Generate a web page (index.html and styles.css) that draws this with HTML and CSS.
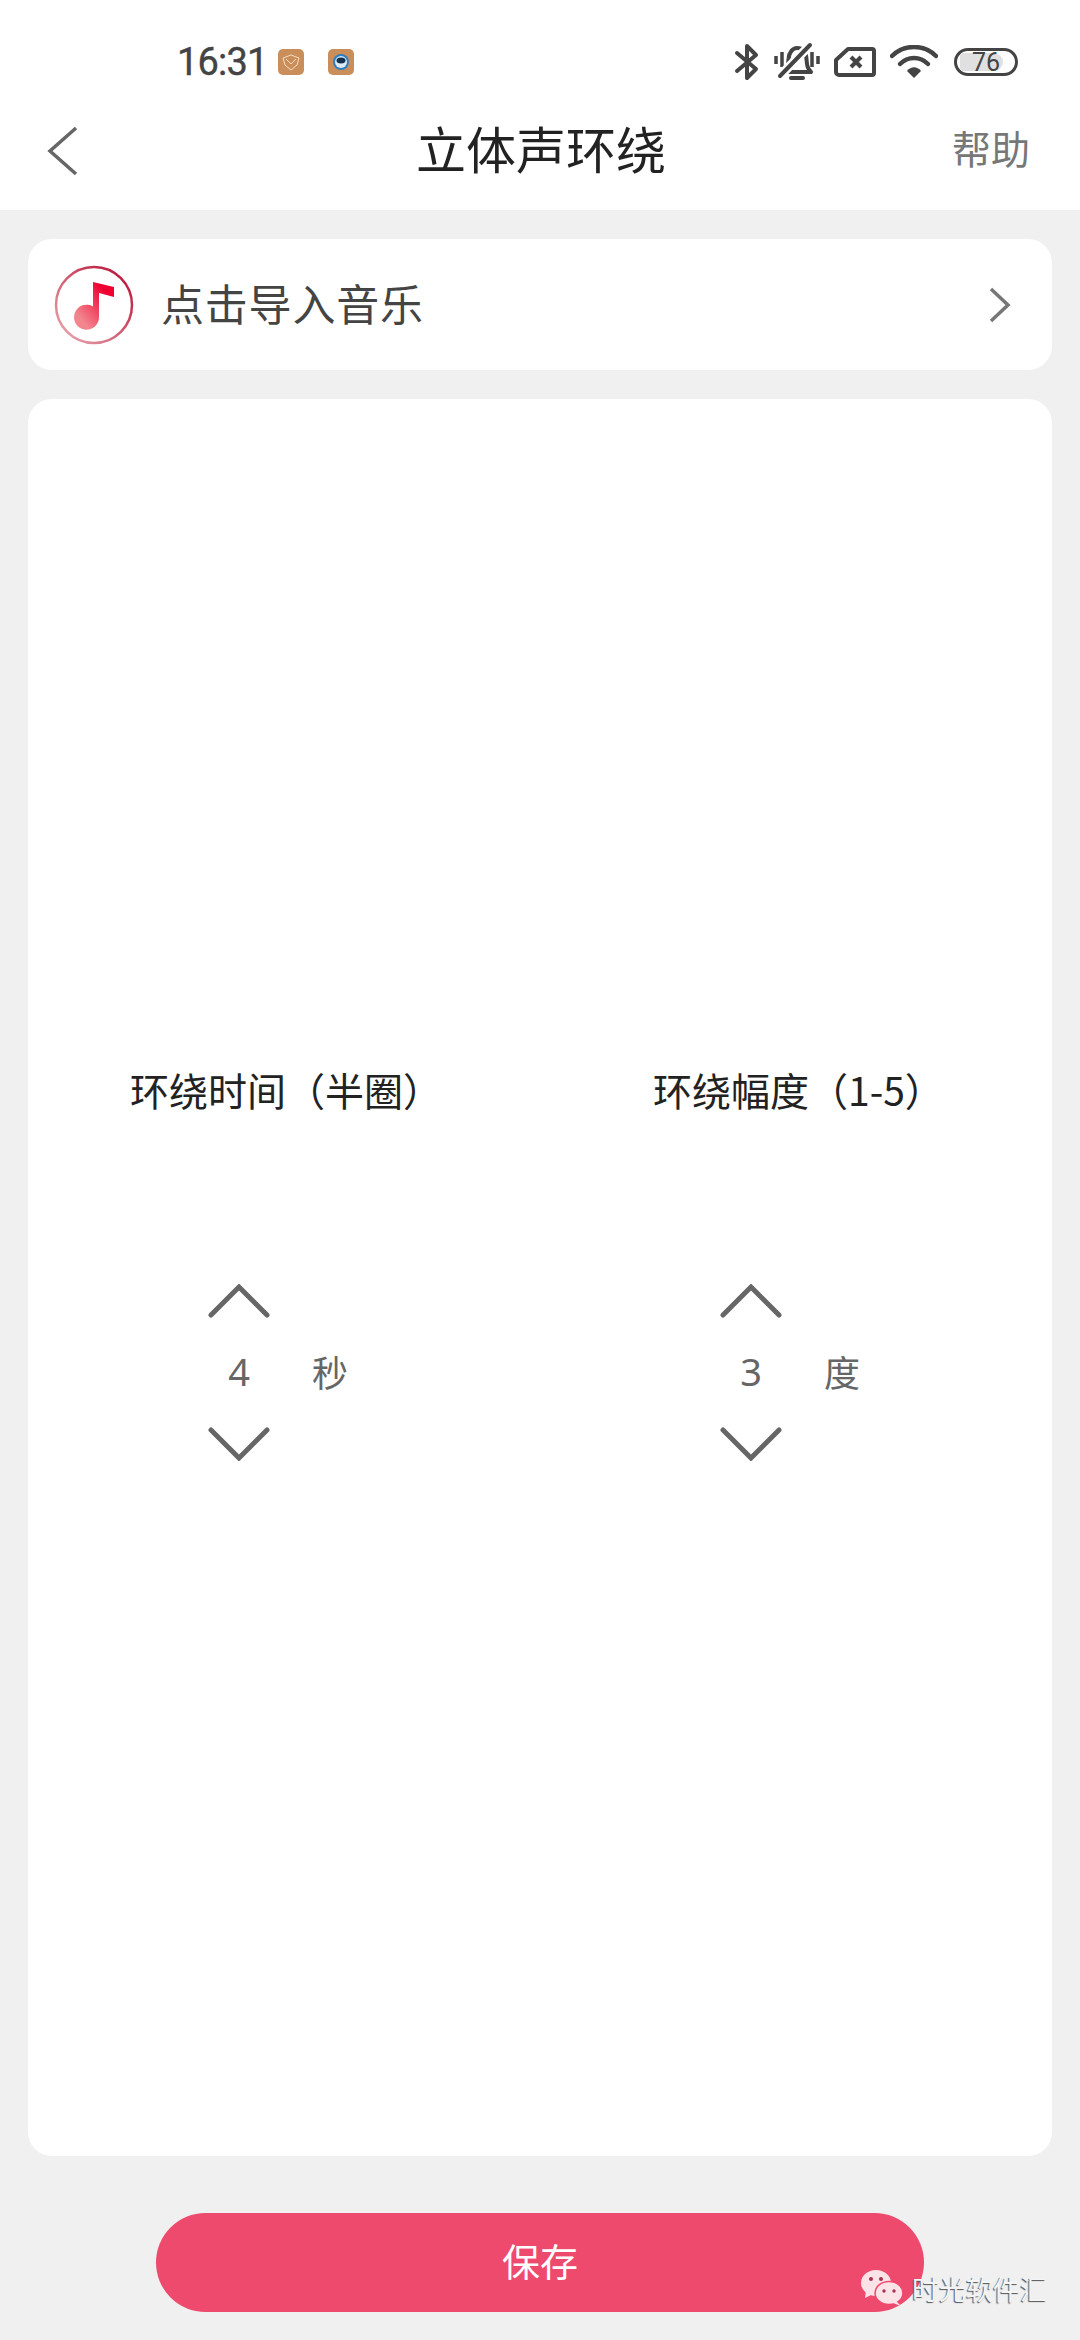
FILE: index.html
```html
<!DOCTYPE html>
<html lang="zh-CN">
<head>
  <meta charset="UTF-8" />
  <title>立体声环绕</title>
  <link rel="stylesheet" href="styles.css">
</head>
<body>
  <header class="top">
    <div class="status">
      <span class="time">16:31</span>
      <span class="app-icon">
        <svg width="26" height="26" viewBox="0 0 26 26"><rect width="26" height="26" rx="5" fill="#c98e5a"/><path d="M5 9 L13 6 L21 9 L19 16 L13 21 L7 16 Z M8 10 L13 15 L18 10" fill="none" stroke="#f7dcc0" stroke-width="1"/></svg>
      </span>
      <span class="app-icon second">
        <svg width="26" height="26" viewBox="0 0 26 26"><rect width="26" height="26" rx="5" fill="#c98e5a"/><circle cx="13" cy="13" r="8" fill="#2f7fc0"/><circle cx="13" cy="13" r="6" fill="#dcebf5"/><ellipse cx="13" cy="11.500" rx="4.500" ry="3" fill="#12304f"/></svg>
      </span>
      <span class="status-right">
        <svg width="26" height="40" viewBox="0 0 26 40"><path d="M3 11 L22 27 L13 36 V4 L22 13 L3 29" fill="none" stroke="#444" stroke-width="4" stroke-linecap="round" stroke-linejoin="round"/></svg>
        <svg width="46" height="40" viewBox="0 0 46 40"><path d="M10 30 C15 26 14 22 14.500 17 C15 10 19 6 23 6 C29 6 32 10 32.500 17 C33 23 33 26 37 30 Z" fill="none" stroke="#444" stroke-width="4" stroke-linejoin="round"/><path d="M17 36 H29" stroke="#444" stroke-width="4" stroke-linecap="round"/><path d="M2 14 V22 M8 10 V25 M38 10 V25 M44 14 V22" stroke="#444" stroke-width="3.500"/><path d="M6 34 L36 3" stroke="#fff" stroke-width="9"/><path d="M6 34 L36 3" stroke="#444" stroke-width="4" stroke-linecap="round"/></svg>
        <svg width="42" height="32" viewBox="0 0 42 32"><path d="M14 3 H38 A2 2 0 0 1 40 5 V27 A2 2 0 0 1 38 29 H5 A3 3 0 0 1 2 26 V14 Z" fill="none" stroke="#444" stroke-width="4" stroke-linejoin="round"/><path d="M17 11 L27 21 M27 11 L17 21" stroke="#444" stroke-width="4"/></svg>
        <svg width="48" height="34" viewBox="0 0 48 34"><path d="M2 11 C14 -1 34 -1 46 11" fill="none" stroke="#444" stroke-width="4.500" stroke-linecap="round"/><path d="M10 19 C18 11 30 11 38 19" fill="none" stroke="#444" stroke-width="4.500" stroke-linecap="round"/><path d="M17 26 C21 21 27 21 31 26 L24 33 Z" fill="#444"/></svg>
        <span class="battery"><span class="battery-fill"></span><span class="battery-num">76</span></span>
      </span>
    </div>
    <nav class="nav">
      <svg class="back" width="32" height="50" viewBox="0 0 32 50"><path d="M29 2 L3 25 L29 48" fill="none" stroke="#666" stroke-width="3.500"/></svg>
      <h1 class="title">立体声环绕</h1>
      <span class="help">帮助</span>
    </nav>
  </header>

  <main class="content">
    <section class="import">
      <svg class="music" width="80" height="80" viewBox="0 0 80 80">
        <defs>
          <linearGradient id="ring" x1="0" y1="1" x2="1" y2="0">
            <stop offset="0" stop-color="#eab0b6"/>
            <stop offset="1" stop-color="#b5082e"/>
          </linearGradient>
          <linearGradient id="note" x1="0" y1="1" x2="1" y2="0">
            <stop offset="0.200" stop-color="#f2858e"/>
            <stop offset="0.800" stop-color="#ee0030"/>
          </linearGradient>
        </defs>
        <circle cx="40" cy="40" r="38" fill="#fff" stroke="url(#ring)" stroke-width="2.500"/>
        <path d="M39 17 L60 22 V32 L45 28 V52 A12.500 12.500 0 1 1 39 41.500 Z" fill="url(#note)"/>
      </svg>
      <span class="import-text">点击导入音乐</span>
      <svg class="more" width="24" height="38" viewBox="0 0 24 38"><path d="M3 3 L20 19 L3 35" fill="none" stroke="#777" stroke-width="3.500"/></svg>
    </section>

    <section class="panel">
      <div class="setting">
        <h2 class="label">环绕时间（半圈）</h2>
        <div class="picker">
          <div class="stepper">
            <svg width="62" height="34" viewBox="0 0 62 34"><path d="M3 31 L31 3 L59 31" fill="none" stroke="#666" stroke-width="5" stroke-linecap="round"/></svg>
            <span class="value">4</span>
            <svg width="62" height="34" viewBox="0 0 62 34"><path d="M3 3 L31 31 L59 3" fill="none" stroke="#666" stroke-width="5" stroke-linecap="round"/></svg>
          </div>
          <span class="unit">秒</span>
        </div>
      </div>
      <div class="setting">
        <h2 class="label">环绕幅度（1-5）</h2>
        <div class="picker">
          <div class="stepper">
            <svg width="62" height="34" viewBox="0 0 62 34"><path d="M3 31 L31 3 L59 31" fill="none" stroke="#666" stroke-width="5" stroke-linecap="round"/></svg>
            <span class="value">3</span>
            <svg width="62" height="34" viewBox="0 0 62 34"><path d="M3 3 L31 31 L59 3" fill="none" stroke="#666" stroke-width="5" stroke-linecap="round"/></svg>
          </div>
          <span class="unit">度</span>
        </div>
      </div>
    </section>

    <button class="save"><span class="save-text">保存</span></button>
  </main>

  <div class="watermark">
    <svg width="44" height="38" viewBox="0 0 44 38">
      <ellipse cx="16" cy="14" rx="15" ry="13" fill="#fbe3e8"/>
      <path d="M6 22 L5 29 L13 25 Z" fill="#fbe3e8"/>
      <ellipse cx="29" cy="24" rx="14" ry="11.500" fill="#fbe3e8" stroke="#ef4a6e" stroke-width="1.500"/>
      <path d="M36 32 L41 37 L33 34 Z" fill="#fbe3e8"/>
      <circle cx="11" cy="10" r="2" fill="#a8324f"/><circle cx="21" cy="10" r="2" fill="#a8324f"/>
      <circle cx="24" cy="22" r="1.700" fill="#a8324f"/><circle cx="34" cy="22" r="1.700" fill="#a8324f"/>
    </svg>
    <span class="mark-text">时光软件汇</span>
  </div>
</body>
</html>
```

FILE: styles.css
```css
* { box-sizing: border-box; }
html, body { margin: 0; padding: 0; }
body { width: 1080px; height: 2340px; position: relative; overflow: hidden; background: #f0f0f0; font-family: "Noto Sans CJK SC", "Noto Sans", sans-serif; color: #111; }

.top { height: 210px; background: #fff; }
.status { height: 90px; padding: 34px 0 0 177px; display: flex; align-items: center; }
.time { width: 100px; font-family: Roboto, sans-serif; font-size: 38px; color: #444; letter-spacing: -0.8px; -webkit-text-stroke: 0.4px #444; }
.app-icon { display: flex; margin-left: 1px; }
.app-icon.second { margin-left: 24px; }
.status-right { margin-left: auto; padding-right: 62px; display: flex; align-items: center; gap: 14px; }
.battery { width: 64px; height: 28px; margin-left: 2px; border: 3px solid #444; border-radius: 14px; position: relative; display: flex; align-items: center; justify-content: center; overflow: hidden; }
.battery-fill { position: absolute; left: 3px; top: 2px; bottom: 2px; width: 43px; background: #e0e0e0; border-radius: 3px 9px 9px 3px; }
.battery-num { position: relative; font-family: Roboto, sans-serif; font-size: 25px; line-height: 1; color: #444; }

.nav { height: 120px; padding: 0 50px 0 47px; display: flex; align-items: center; justify-content: space-between; }
.back { margin-top: 2px; }
.title { margin: 0 0 6px 51px; font-size: 50px; font-weight: 400; line-height: 1; color: #222; }
.help { margin-bottom: 6px; font-size: 39px; line-height: 1; color: #777; }

.content { padding: 29px 28px 0; }
.import { height: 131px; padding: 0 40px 0 26px; background: #fff; border-radius: 24px; display: flex; align-items: center; }
.import-text { margin: 0 0 6px 27px; font-size: 43px; letter-spacing: 0.8px; color: #444; }
.more { margin-left: auto; }

.panel { height: 1757px; margin-top: 29px; background: #fff; border-radius: 24px; padding-top: 664px; display: grid; grid-template-columns: 496px 1fr; align-content: start; }
.setting { display: flex; flex-direction: column; }
.label { margin: 0; padding-left: 102px; font-size: 39px; font-weight: 400; line-height: 52px; white-space: nowrap; color: #222; }
.setting + .setting .label { padding-left: 0; margin-left: 129px; }
.picker { margin-top: 169px; padding-left: 180px; display: flex; align-items: center; }
.setting + .setting .picker { padding-left: 196px; }
.stepper { width: 62px; display: flex; flex-direction: column; align-items: center; }
.value { height: 109px; font-family: "Noto Sans", sans-serif; font-size: 38px; line-height: 107px; color: #666; }
.unit { margin: 0 0 4px 42px; font-size: 36px; color: #666; }

.save { display: block; width: 768px; height: 99px; margin: 57px auto 0; padding: 0 0 6px; border: 0; border-radius: 50px; background: #ee4a6e; color: #fff; font-family: inherit; font-size: 38px; }

.watermark { position: absolute; left: 860px; top: 2269px; display: flex; align-items: center; gap: 8px; }
.mark-text { font-size: 27px; line-height: 1; color: #f4f4f4; text-shadow: -1px 1px 1px #555; }
```
